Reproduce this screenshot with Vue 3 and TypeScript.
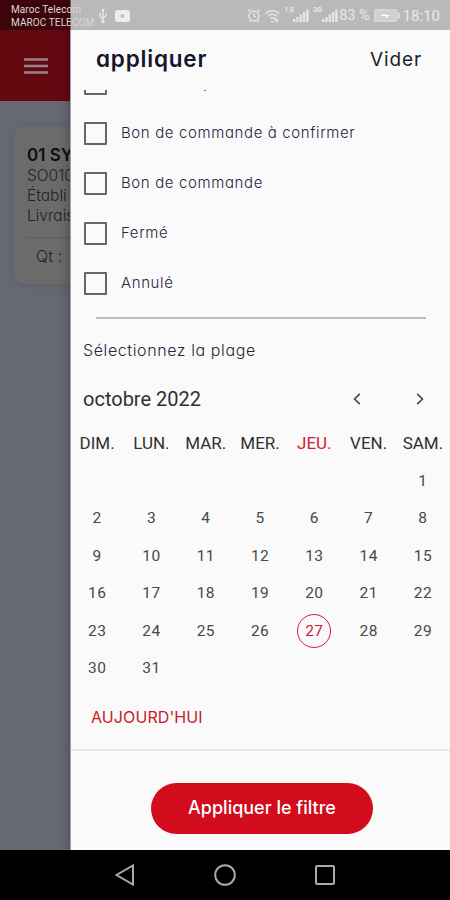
<script setup lang="ts">
const options: string[] = ['Bon de commande à confirmer', 'Bon de commande', 'Fermé', 'Annulé']
const weekdays: string[] = ['DIM.', 'LUN.', 'MAR.', 'MER.', 'JEU.', 'VEN.', 'SAM.']
const today = 27
const cells: (number | null)[] = [
  ...Array<null>(6).fill(null),
  ...Array.from({ length: 31 }, (_, i) => i + 1),
]
const bars = [3, 5, 7.5, 10, 12.5]
</script>

<template>
  <div class="screen">
    <div class="page">
      <div class="appbar">
        <svg width="24" height="18" viewBox="0 0 24 18"><path d="M0 2.5h24M0 9h24M0 15.5h24" stroke="#978487" stroke-width="2.6" /></svg>
      </div>
      <div class="card">
        <div class="card-title">01 SY</div>
        <div class="card-line">SO010</div>
        <div class="card-line">Établi</div>
        <div class="card-line">Livrais</div>
        <div class="card-qty">Qt :</div>
      </div>
    </div>

    <aside class="drawer">
      <header class="top">
        <h1>appliquer</h1>
        <span class="clear">Vider</span>
      </header>
      <div class="clipped">
        <i class="box"></i><i class="tail"></i>
      </div>
      <ul class="options">
        <li v-for="o in options" :key="o"><i class="box"></i><span>{{ o }}</span></li>
      </ul>
      <div class="rule"></div>
      <div class="range">Sélectionnez la plage</div>
      <div class="month">
        <span>octobre 2022</span>
        <svg class="prev" width="10" height="14" viewBox="0 0 10 14"><path d="M7.8 1.8 2.6 7l5.2 5.2" /></svg>
        <svg width="10" height="14" viewBox="0 0 10 14"><path d="M2.2 1.8 7.4 7l-5.2 5.2" /></svg>
      </div>
      <div class="grid">
        <div v-for="w in weekdays" :key="w" class="wd" :class="{ red: w === 'JEU.' }">{{ w }}</div>
        <div v-for="(c, i) in cells" :key="i" class="day"><span :class="{ today: c === today }">{{ c }}</span></div>
      </div>
      <div class="todaybtn">AUJOURD'HUI</div>
      <footer class="foot"><button>Appliquer le filtre</button></footer>
    </aside>

    <div class="status">
      <div class="carrier"><div class="c1">Maroc Telecom</div><div class="c2">MAROC TELECOM</div></div>
      <svg class="usb" width="10" height="16" viewBox="0 0 10 16" fill="none" stroke="#e9e9e9" stroke-width="1.3"><path d="M5 2v11M2 6v2.5l3 2.5M8 5.5V8L5 10" /><path d="M5 0 3.3 3h3.4z" fill="#e9e9e9" stroke="none" /><circle cx="5" cy="13.5" r="1.6" fill="#e9e9e9" stroke="none" /><circle cx="2" cy="6" r="1" fill="#e9e9e9" stroke="none" /></svg>
      <svg class="yt" width="15" height="12" viewBox="0 0 15 12"><rect width="15" height="12" rx="2.5" fill="#ededed" /><path d="M5.8 3.4v5.2L10.2 6z" fill="#b9b9b9" /></svg>
      <div class="spacer"></div>
      <svg class="alarm" width="14" height="15" viewBox="0 0 14 15" fill="none" stroke="#e6e6e6" stroke-width="1.4"><circle cx="7" cy="8" r="5" /><path d="M7 5v3l2 1.2M.8 3.5 3.5 1.2M13.2 3.5l-2.7-2.3M3.5 12.3 2.2 14M10.5 12.3l1.3 1.7" /></svg>
      <svg class="wifi" width="15" height="14" viewBox="0 0 15 14" fill="none" stroke="#e6e6e6" stroke-width="1.5"><path d="M.7 4.6Q7.5-1.6 14.3 4.6M3 7.2q4.500-3.800 9 0M5.200 9.700q2.300-1.900 4.600 0" /><path d="M6.200 12.500h2M10.500 9v4M12.500 10v3" /></svg>
      <div class="sig"><b>1.E</b><svg width="16" height="13" viewBox="0 0 16 13" fill="#e6e6e6"><rect v-for="(h, i) in bars" :key="i" :x="i * 3.3" :y="13 - h" width="2.4" :height="h" /></svg></div>
      <div class="sig"><b>3G</b><svg width="16" height="13" viewBox="0 0 16 13" fill="#e6e6e6"><rect v-for="(h, i) in bars" :key="i" :x="i * 3.3" :y="13 - h" width="2.4" :height="h" /></svg></div>
      <span class="pct">83 %</span>
      <svg class="bat" width="27" height="13" viewBox="0 0 27 13"><rect x=".7" y=".7" width="21.600" height="11.600" fill="#d0d0d0" stroke="#dadada" stroke-width="1.200" /><path d="M24.500 3.500v6" stroke="#e6e6e6" stroke-width="2" /><path d="M6 6.500l5-2v1.500h5l-4 3v-2z" fill="#fff" /></svg>
      <span class="clock">18:10</span>
    </div>

    <nav class="nav">
      <svg width="20" height="22" viewBox="0 0 20 22"><path d="M18 1.500v19L1.500 11z" /></svg>
      <svg width="22" height="22" viewBox="0 0 22 22"><circle cx="11" cy="11" r="9.800" /></svg>
      <svg width="20" height="20" viewBox="0 0 20 20"><rect x="1" y="1" width="18" height="18" rx="1" /></svg>
    </nav>
  </div>
</template>

<style>
body { margin: 0; }
</style>
<style scoped>
* { box-sizing: border-box; }
svg { display: block; flex: none; }
.screen { position: relative; width: 450px; height: 900px; overflow: hidden; background: #000; font-family: Inter, "Liberation Sans", sans-serif; font-feature-settings: "cv11"; display: flex; flex-wrap: wrap; }
.page { width: 70px; height: 850px; padding-top: 30px; background: #666972; }
.appbar { height: 71px; background: #640810; display: flex; align-items: center; padding-left: 24px; }
.card { margin: 25px 0 0 13px; width: 100px; height: 158px; border-radius: 12px; background: #6b6b6b; padding: 19px 0 0 14px; color: #222; white-space: nowrap; box-shadow: 0 1px 6px #5556; }
.card-title { font-size: 17px; line-height: 20px; font-weight: 600; color: #0d0d15; margin-bottom: 1px; }
.card-line { font-size: 15.500px; line-height: 20px; font-weight: 300; }
.card-qty { margin-top: 11px; border-top: 1px solid #5b5b5b; padding: 6px 0 0 9px; font-size: 16px; line-height: 24px; font-weight: 300; }
.drawer { width: 380px; height: 850px; background: #fafafa; border-left: 1px solid #a3a3aa; padding-top: 30px; display: flex; flex-direction: column; box-shadow: 0 0 12px #0005; position: relative; }
.top { height: 58px; flex: none; display: flex; justify-content: space-between; align-items: center; padding: 0 28px 0 25px; color: #15152b; }
h1 { margin: 0; font-size: 22.500px; font-weight: 600; letter-spacing: .8px; line-height: 30px; }
.clear { font-size: 19px; font-weight: 400; letter-spacing: .9px; color: #22222c; }
.clipped { height: 20px; flex: none; overflow: hidden; display: flex; align-items: flex-start; padding: 2px 0 0 13px; clip-path: inset(2px 0 0); }
.clipped .box { margin-top: -18px; }
.tail { width: 2px; height: 1px; background: #777; margin-left: 97px; }
.box { display: block; flex: none; width: 23px; height: 23px; border: 2px solid #666; border-radius: 1px; }
.options { list-style: none; margin: 0; padding: 0 0 0 13px; }
.options li { height: 50px; display: flex; align-items: center; font-size: 15px; font-weight: 300; color: #26263b; letter-spacing: .62px; }
.options span { margin: -1px 0 0 14px; }
.rule { height: 2px; flex: none; background: #bcbcbc; margin: 9px 24px 0 25px; }
.range { margin: 17px 0 0 12px; height: 28px; line-height: 28px; font-size: 16px; font-weight: 300; color: #26263b; letter-spacing: .6px; }
.month { margin: 19px 25px 0 12px; height: 32px; display: flex; align-items: center; font: 400 20px Roboto, sans-serif; color: #303030; }
.month span { flex: 1; }
.month path { fill: none; stroke: #4b4b4b; stroke-width: 1.700; }
.month .prev { margin-right: 53px; }
.grid { margin: 9px 0 0 -1px; display: grid; grid-template-columns: repeat(7, 54.300px); grid-auto-rows: 37.500px; font-family: Roboto, sans-serif; }
.grid > div { display: flex; align-items: center; justify-content: center; }
.wd { font-size: 17px; color: #303030; white-space: nowrap; }
.day { font-size: 15.500px; color: #484848; letter-spacing: .4px; padding-top: 1px; }
.grid .red { color: #d3202f; }
.today { width: 34px; height: 34px; flex: none; border: 1.500px solid #c92035; border-radius: 50%; display: flex; align-items: center; justify-content: center; color: #c92035; }
.todaybtn { margin: 16px 0 0 20px; height: 28px; line-height: 28px; font-size: 16px; color: #c51a2b; letter-spacing: .1px; }
.foot { margin-top: auto; height: 101px; flex: none; border-top: 2px solid #e7e7e7; display: flex; justify-content: center; align-items: flex-start; padding: 32px 0 0 3px; }
button { width: 222px; height: 51px; border: 0; border-radius: 26px; background: #d20c1c; color: #fff; font: 500 18px Inter, sans-serif; font-feature-settings: "cv11"; padding: 0 0 2px; }
.status { position: absolute; inset: 0 0 auto; height: 30px; background: linear-gradient(90deg, #3c050a 70px, #b9b9b9 71px); display: flex; align-items: center; color: #e9e9e9; font-family: Roboto, sans-serif; padding: 1px 10px 0 0; }
.carrier { padding-left: 11px; width: 98px; font-size: 10px; line-height: 13px; white-space: nowrap; color: #dcd6d7; }
.c1 { letter-spacing: .1px; }
.c2 { letter-spacing: .1px; }
.yt { margin-left: 7px; }
.spacer { flex: 1; }
.wifi { margin-left: 4px; }
.sig { position: relative; margin-left: 13px; }
.sig b { position: absolute; left: -9px; top: -3px; font-size: 7px; line-height: 8px; }
.pct { font-size: 14.500px; margin-left: 1px; }
.bat { margin-left: 4px; }
.clock { font-size: 15px; margin-left: 2px; }
.nav { width: 450px; height: 50px; display: flex; align-items: center; justify-content: center; gap: 79px; background: #000; }
.nav path, .nav circle, .nav rect { fill: none; stroke: #aaa; stroke-width: 2; }
</style>
